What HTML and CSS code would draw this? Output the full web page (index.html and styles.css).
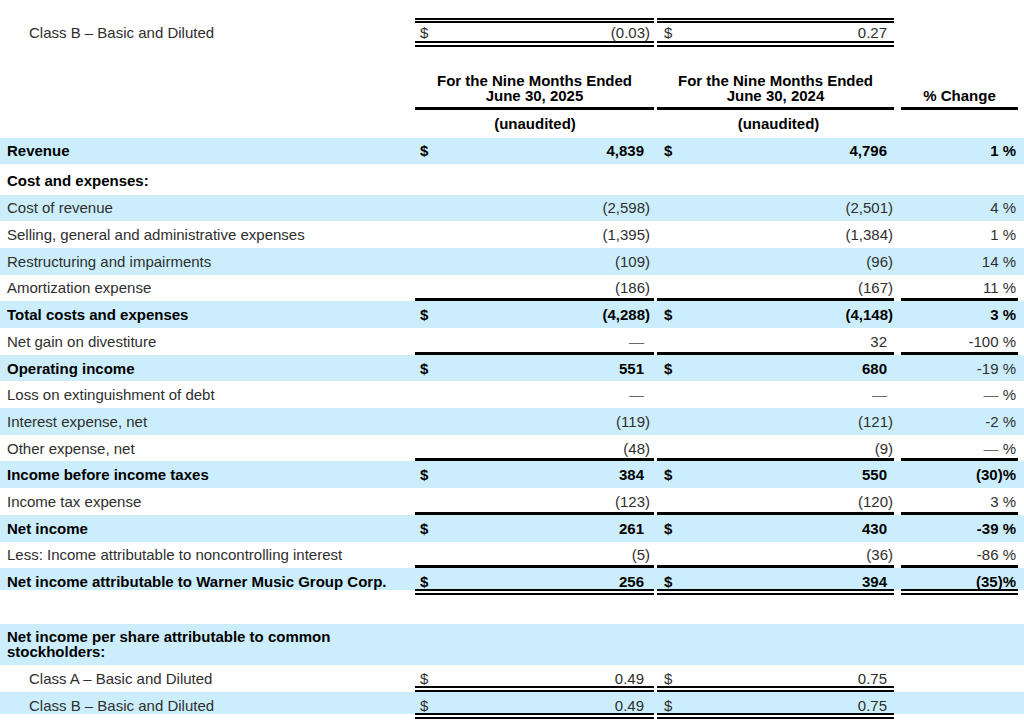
FILE: index.html
```html
<!DOCTYPE html>
<html lang="en">
<head>
<meta charset="utf-8">
<title>Nine Months Statement of Operations</title>
<link rel="stylesheet" href="styles.css">
</head>
<body>
<div class="sheet">
  <div class="row top">
    <div class="label indent">Class B – Basic and Diluted</div>
    <div class="c1 dbl-both"><span>$</span><span>(0.03)</span></div>
    <div class="c2 dbl-both"><span>$</span><span class="np">0.27</span></div>
  </div>

  <div class="row head">
    <div class="c1 hcell">For the Nine Months Ended<br>June 30, 2025</div>
    <div class="c2 hcell">For the Nine Months Ended<br>June 30, 2024</div>
    <div class="c3 hcell">% Change</div>
  </div>
  <div class="row sub">
    <div class="c1 center bold">(unaudited)</div>
    <div class="c2 center bold">(unaudited)</div>
  </div>

  <div class="row shade bold">
    <div class="label">Revenue</div>
    <div class="c1"><span>$</span><span class="np">4,839</span></div>
    <div class="c2"><span>$</span><span class="np">4,796</span></div>
    <div class="c3">1 %</div>
  </div>
  <div class="row section bold">
    <div class="label">Cost and expenses:</div>
  </div>
  <div class="row shade">
    <div class="label">Cost of revenue</div>
    <div class="c1 r"><span>(2,598)</span></div>
    <div class="c2 r"><span>(2,501)</span></div>
    <div class="c3">4 %</div>
  </div>
  <div class="row">
    <div class="label">Selling, general and administrative expenses</div>
    <div class="c1 r"><span>(1,395)</span></div>
    <div class="c2 r"><span>(1,384)</span></div>
    <div class="c3">1 %</div>
  </div>
  <div class="row shade">
    <div class="label">Restructuring and impairments</div>
    <div class="c1 r"><span>(109)</span></div>
    <div class="c2 r"><span>(96)</span></div>
    <div class="c3">14 %</div>
  </div>
  <div class="row">
    <div class="label">Amortization expense</div>
    <div class="c1 r rule"><span>(186)</span></div>
    <div class="c2 r rule"><span>(167)</span></div>
    <div class="c3 rule">11 %</div>
  </div>
  <div class="row shade bold">
    <div class="label">Total costs and expenses</div>
    <div class="c1"><span>$</span><span>(4,288)</span></div>
    <div class="c2"><span>$</span><span>(4,148)</span></div>
    <div class="c3">3 %</div>
  </div>
  <div class="row">
    <div class="label">Net gain on divestiture</div>
    <div class="c1 r rule"><span class="np dash">—</span></div>
    <div class="c2 r rule"><span class="np">32</span></div>
    <div class="c3 rule">-100 %</div>
  </div>
  <div class="row shade bold">
    <div class="label">Operating income</div>
    <div class="c1"><span>$</span><span class="np">551</span></div>
    <div class="c2"><span>$</span><span class="np">680</span></div>
    <div class="c3 regular">-19 %</div>
  </div>
  <div class="row">
    <div class="label">Loss on extinguishment of debt</div>
    <div class="c1 r"><span class="np dash">—</span></div>
    <div class="c2 r"><span class="np dash">—</span></div>
    <div class="c3"><span class="dash">—</span>&nbsp;%</div>
  </div>
  <div class="row shade">
    <div class="label">Interest expense, net</div>
    <div class="c1 r"><span>(119)</span></div>
    <div class="c2 r"><span>(121)</span></div>
    <div class="c3">-2 %</div>
  </div>
  <div class="row">
    <div class="label">Other expense, net</div>
    <div class="c1 r rule"><span>(48)</span></div>
    <div class="c2 r rule"><span>(9)</span></div>
    <div class="c3 rule"><span class="dash">—</span>&nbsp;%</div>
  </div>
  <div class="row shade bold">
    <div class="label">Income before income taxes</div>
    <div class="c1"><span>$</span><span class="np">384</span></div>
    <div class="c2"><span>$</span><span class="np">550</span></div>
    <div class="c3">(30)%</div>
  </div>
  <div class="row">
    <div class="label">Income tax expense</div>
    <div class="c1 r rule"><span>(123)</span></div>
    <div class="c2 r rule"><span>(120)</span></div>
    <div class="c3 rule">3 %</div>
  </div>
  <div class="row shade bold">
    <div class="label">Net income</div>
    <div class="c1"><span>$</span><span class="np">261</span></div>
    <div class="c2"><span>$</span><span class="np">430</span></div>
    <div class="c3">-39 %</div>
  </div>
  <div class="row">
    <div class="label">Less: Income attributable to noncontrolling interest</div>
    <div class="c1 r rule"><span>(5)</span></div>
    <div class="c2 r rule"><span>(36)</span></div>
    <div class="c3 rule">-86 %</div>
  </div>
  <div class="row shade-above bold">
    <div class="label">Net income attributable to Warner Music Group Corp.</div>
    <div class="c1 rule2"><span>$</span><span class="np">256</span></div>
    <div class="c2 rule2"><span>$</span><span class="np">394</span></div>
    <div class="c3 rule2">(35)%</div>
  </div>

  <div class="row shade eps-head bold">
    <div class="label wrap">Net income per share attributable to common stockholders:</div>
  </div>
  <div class="row eps">
    <div class="label indent">Class A – Basic and Diluted</div>
    <div class="c1 rule2"><span>$</span><span class="np">0.49</span></div>
    <div class="c2 rule2"><span>$</span><span class="np">0.75</span></div>
  </div>
  <div class="row eps shade-above">
    <div class="label indent">Class B – Basic and Diluted</div>
    <div class="c1 rule2"><span>$</span><span class="np">0.49</span></div>
    <div class="c2 rule2"><span>$</span><span class="np">0.75</span></div>
  </div>
</div>
</body>
</html>
```

FILE: styles.css
```css
* {
  box-sizing: border-box;
}

body {
  margin: 0;
  background: #ffffff;
  font-family: "Liberation Sans", Arial, sans-serif;
  font-size: 15px;
  color: #2e2e2e;
}

.sheet {
  width: 1024px;
  padding-top: 18px;
}

.row {
  display: grid;
  grid-template-columns: 415px 239px 3px 237px 7px 117px 6px;
  height: 26.7px;
  line-height: 15px;
}

.row > div {
  display: flex;
  align-items: center;
  white-space: nowrap;
}

.label {
  grid-column: 1;
  padding-left: 7px;
}

.indent {
  padding-left: 29px;
}

.c1 {
  grid-column: 2;
  justify-content: space-between;
  padding: 0 4px 0 5px;
}

.c2 {
  grid-column: 4;
  justify-content: space-between;
  padding: 0 1px 0 7px;
}

.c3 {
  grid-column: 6;
  justify-content: flex-end;
  padding-right: 2px;
}

.r {
  justify-content: flex-end;
}

.center {
  justify-content: center;
}

.np {
  padding-right: 6px;
}

.dash {
  color: #6a6a6a;
}

.shade {
  background: #cceefc;
}

.shade-above {
  background: linear-gradient(#cceefc, #cceefc) top left / 100% calc(100% - 5px) no-repeat;
}

.bold {
  font-weight: bold;
  color: #000000;
}

.regular {
  font-weight: normal;
  color: #2e2e2e;
}

.rule {
  border-bottom: 3px solid #000000;
  padding-top: 3px;
}

.rule2 {
  border-bottom: 6px double #000000;
  padding-top: 6px;
}

/* top partial row */
.top {
  height: 29px;
}

.dbl-both {
  border-top: 5px double #000000;
  border-bottom: 6px double #000000;
}

/* column headers */
.head {
  height: auto;
  margin-top: 26px;
  align-items: end;
}

.row > .hcell {
  display: block;
  text-align: center;
  font-weight: bold;
  color: #000000;
  padding: 0 0 4px 0;
  border-bottom: 3px solid #000000;
}

.sub {
  height: 27.5px;
}

.section {
  height: 30.4px;
}

.section .label {
  padding-top: 3px;
}

.eps-head {
  height: 41px;
  margin-top: 29px;
}

.row > .wrap {
  white-space: normal;
}

.eps {
  height: 27px;
}
```
